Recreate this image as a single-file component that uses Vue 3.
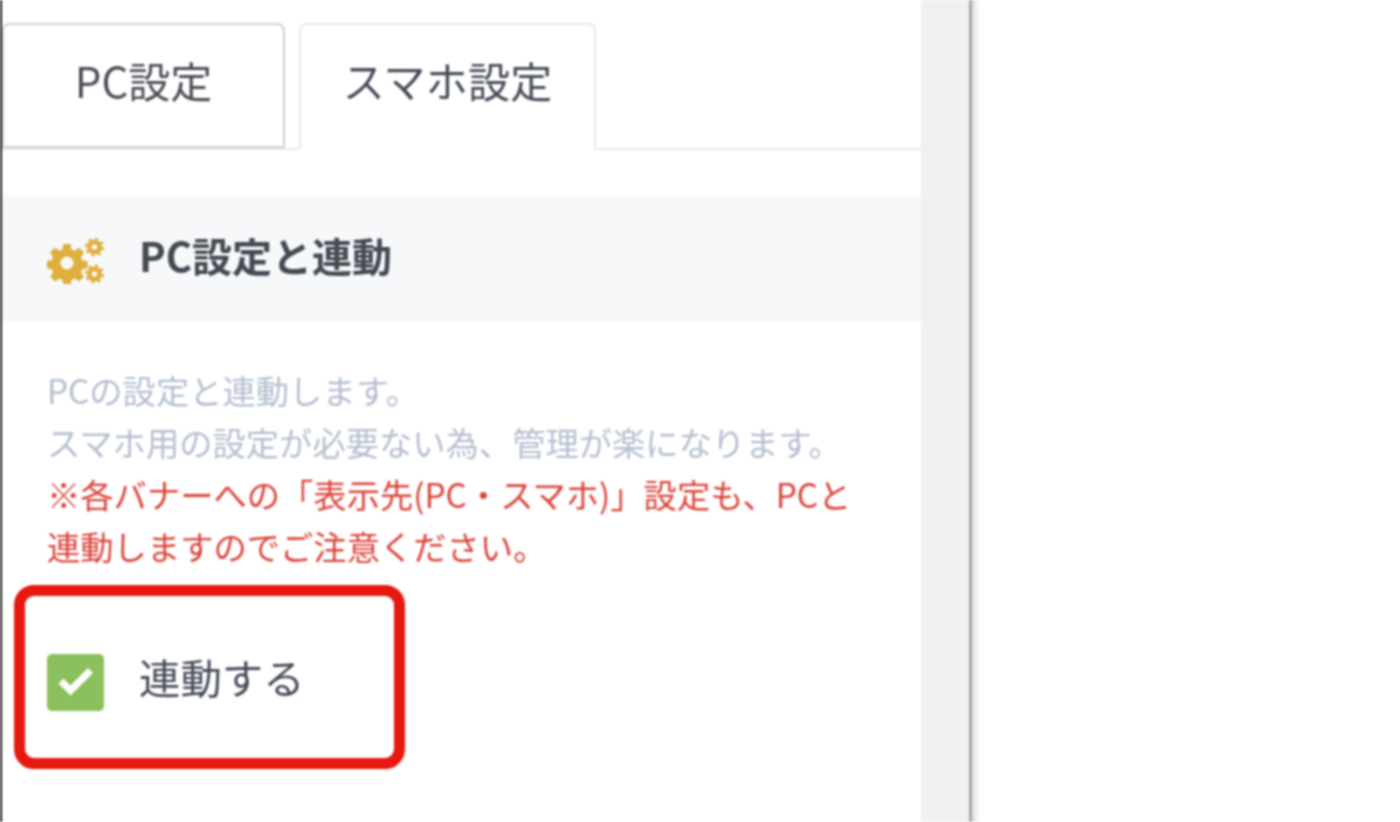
<script setup>
import { ref } from 'vue';

const tabs = ref([
  { label: 'PC設定', active: false },
  { label: 'スマホ設定', active: true }
]);

const notes = ref(['PCの設定と連動します。', 'スマホ用の設定が必要ない為、管理が楽になります。']);
const warnings = ref(['※各バナーへの「表示先(PC・スマホ)」設定も、PCと', '連動しますのでご注意ください。']);
</script>

<template>
  <div class="page">
    <main class="panel">
      <ul class="tabs">
        <li v-for="tab in tabs" :key="tab.label" class="tab" :class="{ active: tab.active }">
          {{ tab.label }}
        </li>
      </ul>

      <h2 class="heading">
        <svg class="gears" viewBox="0 0 56 46" aria-hidden="true">
          <path
            fill="#e0ae3c"
            fill-rule="evenodd"
            d="M16 6h7l1 5.500 3 1.300 4.600-3 4.800 4.800-3 4.600 1.300 3 5.300 1v7l-5.300 1-1.300 3 3 4.600-4.800 4.800-4.600-3-3 1.300-1 5.300h-7l-1-5.300-3-1.300-4.600 3-4.800-4.800 3-4.600-1.300-3-5.300-1v-7l5.300-1 1.300-3-3-4.600 4.800-4.800 4.600 3 3-1.300zM19.500 18.500a6.500 6.500 0 1 0 0 13 6.500 6.500 0 0 0 0-13z"
          />
          <g fill="none" stroke="#e0ae3c">
            <circle cx="47" cy="9" r="5" stroke-width="4.500" />
            <circle cx="47" cy="9" r="8" stroke-width="3" stroke-dasharray="3 3.300" />
            <circle cx="47" cy="36" r="5" stroke-width="4.500" />
            <circle cx="47" cy="36" r="8" stroke-width="3" stroke-dasharray="3 3.300" />
          </g>
        </svg>
        <span class="heading-text">PC設定と連動</span>
      </h2>

      <div class="body">
        <p class="note">
          <span v-for="line in notes" :key="line">{{ line }}</span>
          <span v-for="line in warnings" :key="line" class="warn">{{ line }}</span>
        </p>

        <label class="check">
          <span class="box">
            <svg viewBox="0 0 57 57" aria-hidden="true">
              <path d="M14 27l9.500 9.500 20-20" fill="none" stroke="#fff" stroke-width="7" />
            </svg>
          </span>
          <span class="check-text">連動する</span>
        </label>
        <div class="callout"></div>
      </div>
    </main>
    <div class="gutter"></div>
    <div class="rest"></div>
  </div>
</template>

<style scoped>
.page {
  display: flex;
  height: 822px;
  overflow: hidden;
  background: #fff;
  font-family: "Noto Sans CJK JP", "Noto Sans", sans-serif;
  filter: blur(0.8px);
}

.panel {
  width: 919px;
  flex: none;
  margin-left: -1px;
  border-left: 3px solid #111;
  background: #fff;
}

.tabs {
  display: flex;
  gap: 14px;
  list-style: none;
  margin: 0;
  padding: 23px 0 0;
  border-bottom: 2px solid #e6e9ec;
}

.tab {
  width: 283px;
  height: 125px;
  box-sizing: border-box;
  margin-bottom: -2px;
  padding-bottom: 12px;
  display: flex;
  align-items: center;
  justify-content: center;
  border: 2px solid #d0d0d0;
  border-radius: 8px 8px 0 0;
  color: #4b4f56;
  font-size: 42px;
  line-height: 1;
}

.tab.active {
  width: 297px;
  height: 127px;
  padding-bottom: 14px;
  border-color: #e6e9ec;
  border-bottom-color: #fff;
  color: #464c59;
  letter-spacing: 0.2px;
}

.heading {
  display: flex;
  align-items: center;
  gap: 35px;
  height: 127px;
  box-sizing: border-box;
  margin: 45px 0 0;
  padding-left: 45px;
  background: #f6f8fa;
  color: #444952;
  font-size: 40px;
  font-weight: 700;
}

.heading-text {
  margin-bottom: 8px;
}

.gears {
  width: 57px;
  height: 46px;
  flex: none;
  margin-top: 5px;
}

.body {
  position: relative;
  padding: 42px 45px 0;
}

.note {
  display: flex;
  flex-direction: column;
  margin: 0;
  color: #b4bfd1;
  font-size: 33.3px;
  line-height: 52px;
  white-space: nowrap;
}

.warn {
  color: #dc4339;
}

.check {
  display: flex;
  align-items: center;
  gap: 35px;
  margin-top: 74px;
  color: #464c59;
  font-size: 41.4px;
}

.check-text {
  margin-bottom: 12px;
}

.box {
  width: 57px;
  height: 57px;
  flex: none;
  border-radius: 5px;
  background: #8cbf5e;
}

.box svg {
  display: block;
}

.callout {
  position: absolute;
  left: 12px;
  top: 263px;
  width: 391px;
  height: 184px;
  box-sizing: border-box;
  border: 11px solid #e6180f;
  border-radius: 20px;
}

.gutter {
  width: 48px;
  flex: none;
  background: #f0f0f0;
  border-right: 3px solid #a8a8a8;
}

.rest {
  flex: 1;
  background: linear-gradient(90deg, #dedede, #fff 8px);
}
</style>

<style>
body {
  margin: 0;
}
</style>
